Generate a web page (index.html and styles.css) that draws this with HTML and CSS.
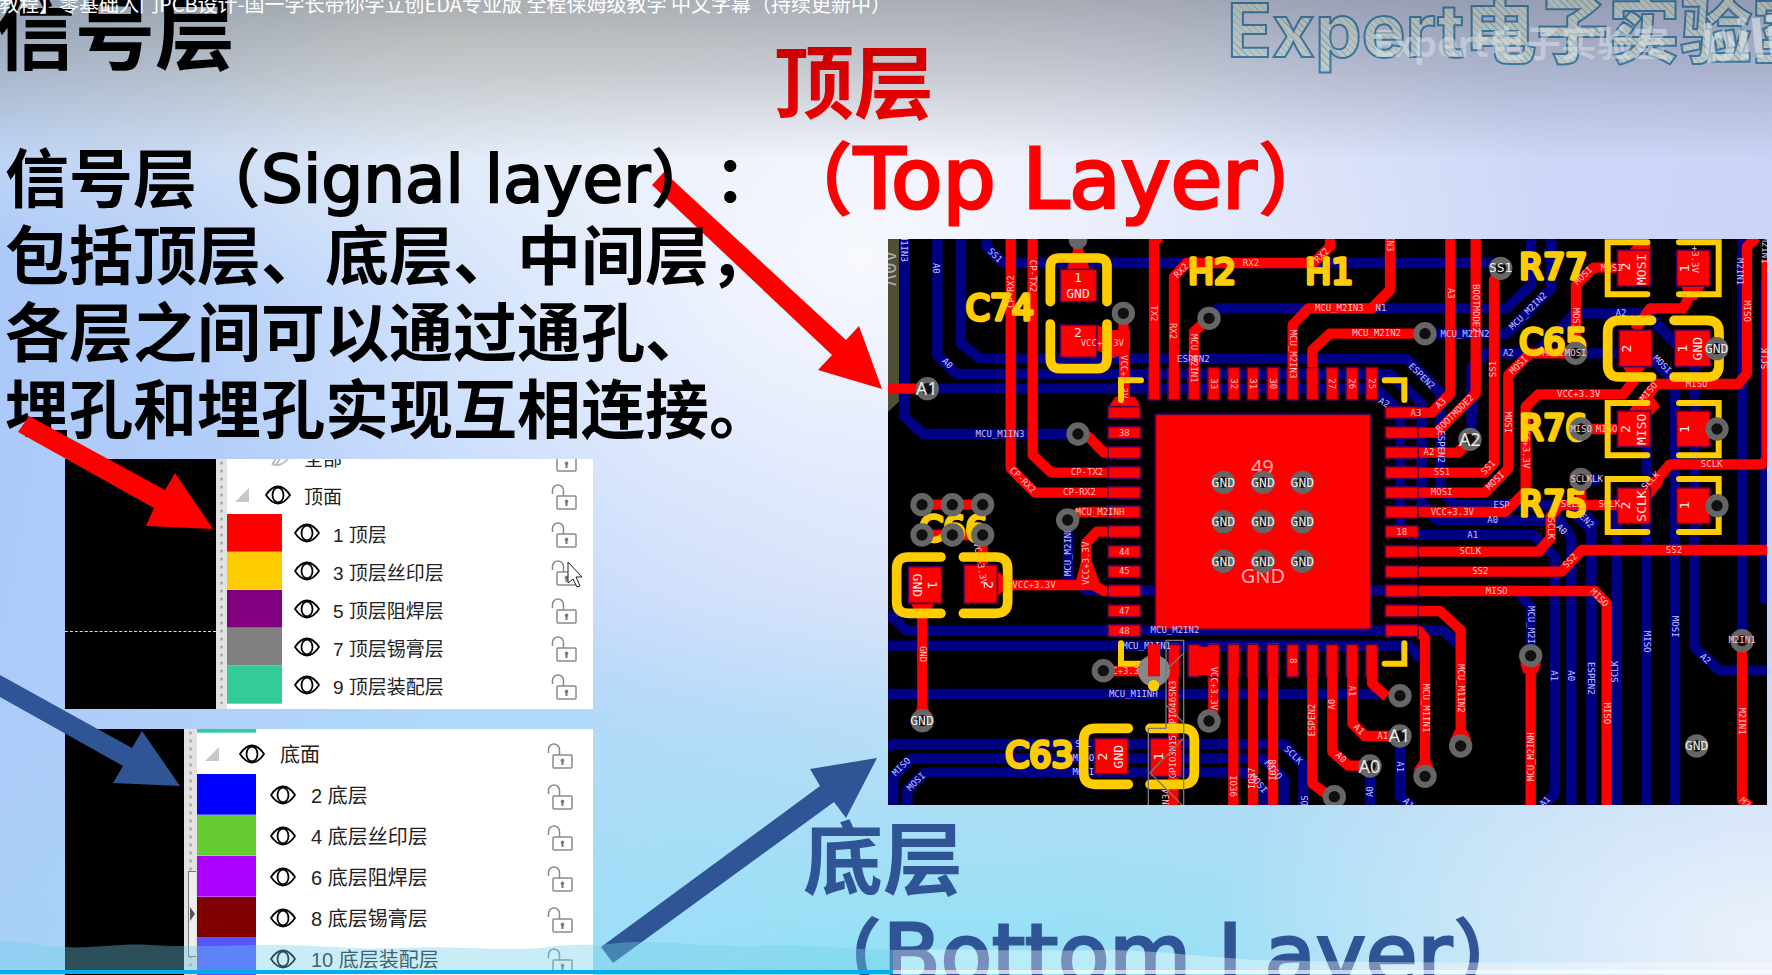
FILE: index.html
```html
<!DOCTYPE html>
<html lang="zh-CN">
<head>
<meta charset="utf-8">
<title>信号层</title>
<link rel="stylesheet" href="styles.css">
</head>
<body>
<svg class="defs" aria-hidden="true">
  <symbol id="eye" viewBox="0 0 26 20">
    <path d="M1 10C5 4 9 1.500 13 1.500S21 4 25 10C21 16 17 18.500 13 18.500S5 16 1 10Z" fill="none" stroke="#000" stroke-width="1.800"/>
    <ellipse cx="13" cy="10" rx="5.500" ry="7.500" fill="none" stroke="#000" stroke-width="1.800"/>
  </symbol>
  <symbol id="eye-off" viewBox="0 0 26 20">
    <path d="M1 10C5 4 9 1.500 13 1.500M8 17C12 20 20 17 25 9M16 3L7 18M20 3L11 18" fill="none" stroke="#bbb" stroke-width="1.800"/>
  </symbol>
  <symbol id="lock" viewBox="0 0 26 26">
    <path d="M1.500 10V6.500A5.500 5.500 0 0 1 12.500 6.500V12" fill="none" stroke="#8a8a8a" stroke-width="1.500"/>
    <rect x="6" y="12" width="19" height="13" rx="1" fill="none" stroke="#8a8a8a" stroke-width="1.500"/>
    <path d="M15.500 15.500a2 2 0 0 1 1 3.600V22h-2v-2.900a2 2 0 0 1 1-3.600Z" fill="#777"/>
  </symbol>
  <symbol id="fold" viewBox="0 0 14 14"><path d="M14 0V14H0Z" fill="#c8c8c8"/></symbol>
</svg>

<main class="slide">
  <svg class="arrows arrows-back" aria-hidden="true">
    <polygon class="arrow-top" points="664,172 846,340 859,326 882,389 818,370 832,355 652,185"/>
  </svg>

  <section class="left">
    <h1 class="title">信号层</h1>
    <p class="intro">信号层（<span class="latin">Signal layer</span>）：<br>包括顶层、底层、中间层，<br>各层之间可以通过通孔、<br>埋孔和埋孔实现互相连接。</p>

    <div class="panel panel-top">
      <div class="canvas"><div class="guide"></div></div>
      <div class="splitter"></div>
      <ul class="layers">
        <li class="group"><span></span><button aria-label="显示全部"><svg class="eye"><use href="#eye-off"/></svg></button><span>全部</span><button class="lock-btn" aria-label="锁定全部"><svg class="lock"><use href="#lock"/></svg></button></li>
        <li class="group"><svg class="fold"><use href="#fold"/></svg><button aria-label="显示顶面"><svg class="eye"><use href="#eye"/></svg></button><span>顶面</span><button class="lock-btn" aria-label="锁定顶面"><svg class="lock"><use href="#lock"/></svg></button></li>
        <li class="layer"><i class="swatch red"></i><button aria-label="显示 1"><svg class="eye"><use href="#eye"/></svg></button><span>1 顶层</span><button class="lock-btn" aria-label="锁定 1"><svg class="lock"><use href="#lock"/></svg></button></li>
        <li class="layer"><i class="swatch yellow"></i><button aria-label="显示 3"><svg class="eye"><use href="#eye"/></svg></button><span>3 顶层丝印层</span><button class="lock-btn" aria-label="锁定 3"><svg class="lock"><use href="#lock"/></svg></button></li>
        <li class="layer"><i class="swatch purple"></i><button aria-label="显示 5"><svg class="eye"><use href="#eye"/></svg></button><span>5 顶层阻焊层</span><button class="lock-btn" aria-label="锁定 5"><svg class="lock"><use href="#lock"/></svg></button></li>
        <li class="layer"><i class="swatch gray"></i><button aria-label="显示 7"><svg class="eye"><use href="#eye"/></svg></button><span>7 顶层锡膏层</span><button class="lock-btn" aria-label="锁定 7"><svg class="lock"><use href="#lock"/></svg></button></li>
        <li class="layer"><i class="swatch green"></i><button aria-label="显示 9"><svg class="eye"><use href="#eye"/></svg></button><span>9 顶层装配层</span><button class="lock-btn" aria-label="锁定 9"><svg class="lock"><use href="#lock"/></svg></button></li>
      </ul>
    </div>

    <div class="panel panel-bottom">
      <div class="canvas"></div>
      <div class="splitter"><div class="handle"></div></div>
      <ul class="layers">
        <li class="sliver"><i class="swatch green"></i></li>
        <li class="group"><svg class="fold"><use href="#fold"/></svg><button aria-label="显示底面"><svg class="eye"><use href="#eye"/></svg></button><span>底面</span><button class="lock-btn" aria-label="锁定底面"><svg class="lock"><use href="#lock"/></svg></button></li>
        <li class="layer"><i class="swatch blue"></i><button aria-label="显示 2"><svg class="eye"><use href="#eye"/></svg></button><span>2 底层</span><button class="lock-btn" aria-label="锁定 2"><svg class="lock"><use href="#lock"/></svg></button></li>
        <li class="layer"><i class="swatch lime"></i><button aria-label="显示 4"><svg class="eye"><use href="#eye"/></svg></button><span>4 底层丝印层</span><button class="lock-btn" aria-label="锁定 4"><svg class="lock"><use href="#lock"/></svg></button></li>
        <li class="layer"><i class="swatch violet"></i><button aria-label="显示 6"><svg class="eye"><use href="#eye"/></svg></button><span>6 底层阻焊层</span><button class="lock-btn" aria-label="锁定 6"><svg class="lock"><use href="#lock"/></svg></button></li>
        <li class="layer"><i class="swatch maroon"></i><button aria-label="显示 8"><svg class="eye"><use href="#eye"/></svg></button><span>8 底层锡膏层</span><button class="lock-btn" aria-label="锁定 8"><svg class="lock"><use href="#lock"/></svg></button></li>
        <li class="layer"><i class="swatch indigo"></i><button aria-label="显示 10"><svg class="eye"><use href="#eye"/></svg></button><span>10 底层装配层</span><button class="lock-btn" aria-label="锁定 10"><svg class="lock"><use href="#lock"/></svg></button></li>
      </ul>
    </div>
  </section>

  <section class="right">
    <h2 class="caption caption-top">顶层<br>（<span class="latin">Top Layer</span>）</h2>
    <svg class="pcb" viewBox="24 27 2637 1698" role="img" aria-label="PCB">
      <defs>
        <g id="via"><circle r="35" fill="#666"/><circle r="17" fill="#101010"/></g>
        <rect id="ph" x="-49" y="-18" width="98" height="36"/>
        <rect id="pv" x="-18" y="-49" width="36" height="98"/>
      </defs>
      <rect x="24" y="27" width="2637" height="1698" fill="#000"/>
      <path d="M24 27H57V515L24 545Z" fill="#4f4f36"/>
      <g class="blue-track">
        <path d="M73 27V560L130 612H594"/>
        <path d="M172 27V375L230 432H1530L1625 520V820L1670 870H2040L2074 925V1727"/>
        <path d="M242 27V340L300 386H1580L1682 490V780L1725 825H2060L2134 900V1727"/>
        <path d="M142 476H1490L1562 548V890L1590 914H1960L2025 980V1690L1985 1730"/>
        <path d="M320 27V50L370 99H1862"/>
        <path d="M987 265L1015 235H1880L1953 165V27"/>
        <path d="M1635 311H1880L2014 175V27"/>
        <path d="M1775 620V410L1815 370H2210M1970 370L2085 250H2300L2443 400V1250L2520 1322H2661"/>
        <path d="M2300 370L2385 455V1727M2300 600V1727M2210 800V1727M2587 27V1230M2656 150V1120"/>
        <path d="M600 1065L620 1081H1910L1952 1130V1270"/>
        <path d="M24 1150L80 1202H1690L1742 1250"/>
        <path d="M24 1247H1590L1625 1290M24 1392H1500"/>
        <path d="M24 1556L40 1542H1210L1270 1605V1727"/>
        <path d="M40 1727V1640L95 1585H1150L1214 1650V1727"/>
        <path d="M82 1727V1680L135 1627H1100L1155 1690V1727"/>
        <path d="M565 870V1050M1560 1520V1700L1595 1730M1470 1610V1727"/>
        <path d="M2103 745L2160 750M2100 840L2150 890"/>
      </g>
      <g class="red-track">
        <path d="M24 476H142M392 27V715L465 788H782M458 27V675L515 728H782"/>
        <path d="M594 612L625 620L672 668H782M594 27V130M730 250L735 530M650 330L735 310"/>
        <path d="M822 27V510M822 35L840 20M882 510V140L920 99H1300L1350 50V27"/>
        <path d="M987 265L942 305V510M1530 27V180L1475 235H1285L1238 285V510"/>
        <path d="M1635 311H1350L1297 360V510M1711 27V490L1655 548H1516"/>
        <path d="M1787 27V490L1670 608H1516M1770 625L1735 668H1516"/>
        <path d="M1862 115L1842 150V700L1815 728H1516"/>
        <path d="M2230 113H2140L2088 165V370H1950L1885 435V715L1815 788H1516"/>
        <path d="M1516 846H1875L1937 785V530L1975 493H2230L2270 440"/>
        <path d="M2260 550L2330 462H2575L2601 430V50L2630 22"/>
        <path d="M2660 90V690L2645 703H2370L2270 820"/>
        <path d="M2450 150L2410 235H2310L2265 300M2103 597H2240"/>
        <path d="M2240 825H2040L2012 860V925L1975 965H1516M2103 760V825"/>
        <path d="M1516 1025H2045L2105 960H2661M1516 1083H2145L2180 1120V1727"/>
        <path d="M1516 1143H1680L1742 1200V1548M1516 1202H1615L1635 1225V1640"/>
        <path d="M1952 1277V1727M2586 1232V1710L2610 1730"/>
        <path d="M563 870L600 846H782M782 905H650L618 940V1000L600 1065M360 1065H640L672 1083H782"/>
        <path d="M126 824H308M126 915H308V1010M127 1100V1470M670 1323H810"/>
        <path d="M880 1240V1727M1060 1240V1727M1119 1240V1727M1179 1240V1727"/>
        <path d="M1297 1290V1660L1350 1700M1357 1290V1565L1405 1607H1460"/>
        <path d="M1417 1290V1480L1455 1518H1550M1476 1290V1360L1520 1400M1000 1240V1440L987 1470"/>
      </g>
      <g fill="#f00">
        <path d="M560 120L580 60H610L630 120ZM650 285L690 300H750V360L700 385L650 360ZM706 500H765L783 532H685ZM2212 100L2270 35H2311V100ZM2400 160H2480L2450 210H2420ZM2212 590L2270 545 2320 500 2340 530 2311 560V650ZM2212 825L2290 770 2340 730 2350 760 2311 810ZM594 1060L605 980H630L660 1060ZM105 1450L115 1420H140L150 1450ZM2225 405H2300L2275 445H2250ZM85 1110H170L145 1150H110ZM350 1020L390 1060 352 1100ZM1930 1330L1920 1300H1984L1972 1330ZM1600 1620L1620 1590H1650L1665 1620ZM1710 1530L1725 1500H1760L1775 1530Z"/>
      </g>
      <g class="pads">
        <rect x="826" y="553" width="647" height="645"/>
        <use href="#ph" x="733" y="548"/><use href="#ph" x="733" y="608"/><use href="#ph" x="733" y="668"/><use href="#ph" x="733" y="728"/><use href="#ph" x="733" y="788"/><use href="#ph" x="733" y="846"/><use href="#ph" x="733" y="905"/><use href="#ph" x="733" y="965"/><use href="#ph" x="733" y="1025"/><use href="#ph" x="733" y="1083"/><use href="#ph" x="733" y="1143"/><use href="#ph" x="733" y="1202"/>
        <use href="#ph" x="1565" y="548"/><use href="#ph" x="1565" y="608"/><use href="#ph" x="1565" y="668"/><use href="#ph" x="1565" y="728"/><use href="#ph" x="1565" y="788"/><use href="#ph" x="1565" y="846"/><use href="#ph" x="1565" y="905"/><use href="#ph" x="1565" y="965"/><use href="#ph" x="1565" y="1025"/><use href="#ph" x="1565" y="1083"/><use href="#ph" x="1565" y="1143"/><use href="#ph" x="1565" y="1202"/>
        <use href="#pv" x="822" y="461"/><use href="#pv" x="882" y="461"/><use href="#pv" x="942" y="461"/><use href="#pv" x="1001" y="461"/><use href="#pv" x="1061" y="461"/><use href="#pv" x="1119" y="461"/><use href="#pv" x="1179" y="461"/><use href="#pv" x="1238" y="461"/><use href="#pv" x="1297" y="461"/><use href="#pv" x="1356" y="461"/><use href="#pv" x="1416" y="461"/><use href="#pv" x="1475" y="461"/>
        <use href="#pv" x="822" y="1292"/><use href="#pv" x="882" y="1292"/><use href="#pv" x="942" y="1292"/><use href="#pv" x="1001" y="1292"/><use href="#pv" x="1061" y="1292"/><use href="#pv" x="1119" y="1292"/><use href="#pv" x="1179" y="1292"/><use href="#pv" x="1238" y="1292"/><use href="#pv" x="1297" y="1292"/><use href="#pv" x="1356" y="1292"/><use href="#pv" x="1416" y="1292"/><use href="#pv" x="1475" y="1292"/>
        <rect x="541" y="118" width="109" height="97"/><rect x="541" y="285" width="109" height="97"/>
        <rect x="2217" y="300" width="99" height="110"/><rect x="2384" y="300" width="108" height="110"/>
        <rect x="2212" y="60" width="99" height="108"/><rect x="2390" y="60" width="100" height="108"/>
        <rect x="2212" y="543" width="99" height="108"/><rect x="2390" y="543" width="100" height="108"/>
        <rect x="2212" y="773" width="99" height="108"/><rect x="2390" y="773" width="100" height="108"/>
        <rect x="85" y="1010" width="100" height="110"/><rect x="252" y="1005" width="100" height="115"/>
        <rect x="644" y="1525" width="100" height="107"/><rect x="810" y="1525" width="95" height="115"/>
      </g>
      <path d="M950 1255H1010V1270L972 1290ZM950 1335L972 1320 1010 1335ZM935 1250H1005V1330H935ZM1284 412H1310V380H1284ZM808 420H836V380H808ZM868 420H896V380H868ZM928 420H956V380H928ZM1224 420H1252V380H1224Z" fill="#f00"/>
      <path d="M1046 1300H1074V1360H1046ZM1105 1300H1133V1360H1105ZM1165 1300H1193V1360H1165ZM1283 1300H1311V1360H1283ZM1343 1300H1371V1360H1343ZM1403 1300H1431V1360H1403ZM1462 1300H1490V1350H1462ZM866 1300H895V1360H866Z" fill="#f00"/>

      <g class="net blue-net">
        <text transform="translate(73 55) rotate(90)">M1IN3</text>
        <text transform="translate(168 115) rotate(90)">A0</text>
        <text transform="translate(345 76) rotate(45)">SS1</text>
        <text transform="translate(202 400) rotate(45)">A0</text>
        <text x="360" y="612">MCU_M1IN3</text>
        <text x="940" y="386">ESPEN2</text>
        <text x="1503" y="235">N1</text>
        <text x="1755" y="311">MCU_M2IN2</text>
        <text transform="translate(1625 438) rotate(45)">ESPEN2</text>
        <text transform="translate(1512 518) rotate(30)">A2</text>
        <text transform="translate(1682 650) rotate(90)">ESPEN2</text>
        <text transform="translate(1944 243) rotate(-45)">MCU_M2IN2</text>
        <text x="1885" y="370">A2</text><text x="2223" y="250">A2</text>
        <text transform="translate(2347 403) rotate(45)">MOSI</text>
        <text transform="translate(2580 125) rotate(90)">M2IN1</text>
        <text transform="translate(2656 60) rotate(90)">M2IN1</text>
        <text x="1865" y="824">ESP</text><text x="1838" y="870">A0</text>
        <text transform="translate(2120 872) rotate(45)">EN2</text>
        <text transform="translate(2045 898) rotate(45)">A0</text>
        <text x="1778" y="914">A1</text>
        <text transform="translate(565 965) rotate(-90)">MCU_M2INH</text>
        <text x="885" y="1200">MCU_M2IN2</text><text x="800" y="1247">MCU_M1IN1</text><text x="760" y="1392">MCU_M1INH</text>
        <text x="610" y="1542">SCL</text><text x="610" y="1585">MISO</text><text x="610" y="1627">MOSI</text>
        <text transform="translate(64 1610) rotate(-45)">MISO</text>
        <text transform="translate(108 1655) rotate(-45)">MOSI</text>
        <text transform="translate(1240 1575) rotate(45)">SCLK</text>
        <text transform="translate(1180 1620) rotate(50)">MISO</text>
        <text transform="translate(1136 1660) rotate(50)">MOSI</text>
        <text transform="translate(1274 1712) rotate(-90)">OS</text>
        <text transform="translate(1470 1685) rotate(-90)">A0</text>
        <text transform="translate(1559 1610) rotate(90)">A1</text>
        <text transform="translate(1585 1720) rotate(45)">A1</text>
        <text transform="translate(1953 1185) rotate(90)">MCU_M2I</text>
        <text transform="translate(2023 1337) rotate(90)">A1</text>
        <text transform="translate(2072 1337) rotate(90)">A0</text>
        <text transform="translate(2134 1345) rotate(90)">ESPEN2</text>
        <text transform="translate(2206 1325) rotate(-90)">SCLK</text>
        <text transform="translate(2300 1235) rotate(90)">MISO</text>
        <text transform="translate(2384 1190) rotate(90)">MOSI</text>
        <text transform="translate(2476 1286) rotate(45)">A2</text>
        <text transform="translate(1995 1715) rotate(-45)">A1</text>
      </g>
      <g class="net red-net">
        <text transform="translate(392 185) rotate(-90)">CP-RX2</text>
        <text transform="translate(458 138) rotate(90)">CP-TX2</text>
        <text transform="translate(428 750) rotate(45)">CP-RX2</text>
        <text x="621" y="727">CP-TX2</text><text x="598" y="787">CP-RX2</text><text x="660" y="846">MCU_M2INH</text>
        <text x="667" y="340">VCC+3.3V</text>
        <text transform="translate(733 440) rotate(90)">VCC+3.3V</text>
        <text transform="translate(822 250) rotate(90)">TX2</text>
        <text transform="translate(880 303) rotate(90)">RX2</text>
        <text transform="translate(903 122) rotate(-45)">RX2</text>
        <text x="1113" y="98">RX2</text>
        <text transform="translate(1325 76) rotate(-45)">RX2</text>
        <text transform="translate(942 385) rotate(90)">MCU_M2IN1</text>
        <text transform="translate(1238 372) rotate(90)">MCU_M2IN3</text>
        <text transform="translate(1530 40) rotate(90)">IN3</text>
        <text x="1378" y="234">MCU_M2IN3</text><text x="1490" y="310">MCU_M2IN2</text>
        <text transform="translate(1712 190) rotate(90)">A3</text>
        <text transform="translate(1787 235) rotate(90)">BOOTMODE2</text>
        <text transform="translate(1682 520) rotate(-45)">A3</text>
        <text transform="translate(1725 550) rotate(-45)">BOOTMODE2</text>
        <text x="1608" y="548">A3</text><text x="1647" y="667">A2</text><text x="1686" y="726">SS1</text><text x="1685" y="786">MOSI</text><text x="1717" y="846">VCC+3.3V</text>
        <text transform="translate(1840 417) rotate(-90)">SS1</text>
        <text transform="translate(1824 712) rotate(-45)">SS1</text>
        <text transform="translate(1846 752) rotate(-45)">MOSI</text>
        <text transform="translate(1885 577) rotate(90)">MOSI</text>
        <text transform="translate(1916 405) rotate(-45)">MOSI</text>
        <text transform="translate(2088 265) rotate(90)">MOSI</text>
        <text transform="translate(2110 137) rotate(-45)">MOSI</text>
        <text x="2195" y="113">MOSI</text><text x="2020" y="370">MOSI</text>
        <text x="2096" y="491">VCC+3.3V</text>
        <text transform="translate(1938 650) rotate(90)">VCC+3.3V</text>
        <text transform="translate(2306 485) rotate(-50)">MISO</text>
        <text x="2450" y="462">MISO</text><text x="2495" y="702">SCLK</text><text x="2180" y="597">MISO</text><text x="2188" y="823">SCLK</text><text x="2075" y="823">SCLK</text>
        <text transform="translate(2602 243) rotate(90)">MISO</text>
        <text transform="translate(2655 385) rotate(-90)">SCLK</text>
        <text transform="translate(2312 752) rotate(-45)">SCLK</text>
        <text transform="translate(2445 80) rotate(90)">C+3.3V</text>
        <text transform="translate(2013 895) rotate(90)">SCLK</text>
        <text x="1771" y="964">SCLK</text><text x="1801" y="1023">SS2</text><text x="1850" y="1083">MISO</text><text x="2382" y="959">SS2</text>
        <text transform="translate(2070 992) rotate(-45)">SS2</text>
        <text transform="translate(2158 1103) rotate(45)">MISO</text>
        <text transform="translate(2182 1450) rotate(90)">MISO</text>
        <text transform="translate(1742 1375) rotate(90)">MCU_M1IN2</text>
        <text transform="translate(1637 1434) rotate(90)">MCU_M1IN1</text>
        <text transform="translate(1952 1580) rotate(-90)">MCU_M2INH</text>
        <text transform="translate(2587 1473) rotate(90)">M2IN1</text>
        <text transform="translate(2595 1718) rotate(45)">M2</text>
        <text x="462" y="1065">VCC+3.3V</text>
        <text transform="translate(618 1000) rotate(-90)">VCC+3.3V</text>
        <text transform="translate(301 1000) rotate(80)">VCC+3.3V</text>
        <text transform="translate(128 1272) rotate(90)">GND</text>
        <text x="745" y="1322">C+3.3V</text>
        <text transform="translate(1001 1375) rotate(90)">VCC+3.3V</text>
        <text transform="translate(880 1425) rotate(-90)">GPIO46SN3</text>
        <text transform="translate(880 1580) rotate(-90)">GPIO3N15</text>
        <text transform="translate(858 1700) rotate(-90)">N34</text>
        <text transform="translate(1060 1668) rotate(90)">IO36</text>
        <text transform="translate(1117 1645) rotate(-90)">IO37</text>
        <text transform="translate(1178 1620) rotate(-90)">IO38</text>
        <text transform="translate(1296 1470) rotate(-90)">ESPEN2</text>
        <text transform="translate(1357 1423) rotate(-90)">A0</text>
        <text transform="translate(1416 1383) rotate(90)">A1</text>
        <text transform="translate(1437 1498) rotate(45)">A1</text>
        <text x="1508" y="1518">A1</text>
        <text transform="translate(1383 1582) rotate(45)">A0</text>
        <text x="733" y="608">38</text><text x="733" y="965">44</text><text x="733" y="1023">45</text><text x="733" y="1142">47</text><text x="733" y="1202">48</text><text x="1565" y="905">18</text>
        <text transform="translate(1001 461) rotate(90)">33</text><text transform="translate(1061 461) rotate(90)">32</text><text transform="translate(1119 461) rotate(90)">31</text><text transform="translate(1179 461) rotate(90)">30</text><text transform="translate(1356 461) rotate(90)">27</text><text transform="translate(1416 461) rotate(90)">26</text><text transform="translate(1475 461) rotate(90)">25</text><text transform="translate(1238 1292) rotate(90)">8</text>
      </g>

      <g class="silk">
        <path d="M511 215V110Q511 84 537 84H655Q681 84 681 110V215M511 282V385Q511 416 540 416H652Q681 416 681 385V282"/>
        <path d="M2315 271H2218Q2183 271 2183 306V406Q2183 441 2218 441H2315M2382 271H2482Q2517 271 2517 306V406Q2517 441 2482 441H2382"/>
        <path d="M183 981H85Q50 981 50 1016V1115Q50 1150 85 1150H183M250 981H348Q383 981 383 1016V1115Q383 1150 348 1150H250"/>
        <path d="M745 1495H646Q611 1495 611 1530V1628Q611 1663 646 1663H745M810 1495H908Q943 1495 943 1530V1628Q943 1663 908 1663H810"/>
      </g>
      <g class="silk thin">
        <path d="M2302 37H2183V193H2302M2397 37H2516V193H2397M2302 519H2183V676H2302M2397 519H2516V676H2397M2302 747H2183V906H2302M2397 747H2516V906H2397"/>
        <path d="M723 510V451H783M1514 451H1573V510M723 1240V1301H783M1514 1301H1573V1240"/>
      </g>
      <g class="ref">
        <text x="360" y="269">C74</text><text x="996" y="163">H2</text><text x="1348" y="163">H1</text>
        <text x="2020" y="147">R77</text><text x="2020" y="373">C65</text><text x="2020" y="629">R76</text><text x="2020" y="858">R75</text>
        <text x="220" y="934">C66</text><text x="478" y="1611">C63</text>
      </g>

      <circle cx="822" cy="1322" r="48" fill="#888"/>
      <rect x="804" y="1243" width="36" height="96" fill="#f00"/>
      <circle cx="821" cy="1367" r="17" fill="#fc0"/>
      <path d="M858 1231H911V1727M858 1231V1495H805V1727M858 1320L911 1270M858 1425L911 1478M911 1525L810 1628L908 1727" fill="none" stroke="#777" stroke-width="4"/>

      <g>
        <circle cx="594" cy="30" r="28" fill="#666"/>
        <use href="#via" x="730" y="250"/><use href="#via" x="142" y="476"/><use href="#via" x="594" y="612"/>
        <use href="#via" x="126" y="824"/><use href="#via" x="217" y="824"/><use href="#via" x="308" y="824"/>
        <use href="#via" x="126" y="915"/><use href="#via" x="217" y="915"/><use href="#via" x="308" y="915"/>
        <use href="#via" x="563" y="870"/><use href="#via" x="987" y="265"/><use href="#via" x="1635" y="311"/>
        <use href="#via" x="1862" y="115"/><use href="#via" x="1770" y="628"/><use href="#via" x="2087" y="370"/>
        <use href="#via" x="2510" y="356"/><use href="#via" x="2103" y="597"/><use href="#via" x="2103" y="748"/>
        <use href="#via" x="2511" y="597"/><use href="#via" x="2511" y="827"/>
        <use href="#via" x="1030" y="757"/><use href="#via" x="1149" y="757"/><use href="#via" x="1267" y="757"/>
        <use href="#via" x="1030" y="875"/><use href="#via" x="1149" y="875"/><use href="#via" x="1267" y="875"/>
        <use href="#via" x="1030" y="994"/><use href="#via" x="1149" y="994"/><use href="#via" x="1267" y="994"/>
        <use href="#via" x="127" y="1472"/><use href="#via" x="670" y="1322"/><use href="#via" x="987" y="1473"/>
        <use href="#via" x="1363" y="1700"/><use href="#via" x="1470" y="1608"/><use href="#via" x="1560" y="1518"/>
        <use href="#via" x="1560" y="1397"/><use href="#via" x="1635" y="1639"/><use href="#via" x="1742" y="1548"/>
        <use href="#via" x="1952" y="1277"/><use href="#via" x="2586" y="1232"/><use href="#via" x="2450" y="1548"/>
      </g>
      <g class="net pin">
        <text x="1030" y="757">GND</text><text x="1149" y="757">GND</text><text x="1267" y="757">GND</text>
        <text x="1030" y="875">GND</text><text x="1149" y="875">GND</text><text x="1267" y="875">GND</text>
        <text x="1030" y="994">GND</text><text x="1149" y="994">GND</text><text x="1267" y="994">GND</text>
        <text x="126" y="1472">GND</text><text x="2450" y="1547">GND</text><text x="2510" y="354">GND</text>
        <text x="1862" y="113">SS1</text><text x="594" y="142">1</text><text x="594" y="190">GND</text><text x="594" y="308">2</text>
        <text transform="translate(2236 110) rotate(-90)">2</text><text transform="translate(2284 118) rotate(-90)">MOSI</text><text transform="translate(2413 115) rotate(-90)">1</text>
        <text transform="translate(2240 356) rotate(-90)">2</text><text transform="translate(2408 356) rotate(-90)">1</text><text transform="translate(2453 356) rotate(-90)">GND</text>
        <text transform="translate(2236 597) rotate(-90)">2</text><text transform="translate(2284 598) rotate(-90)">MISO</text><text transform="translate(2413 597) rotate(-90)">1</text>
        <text transform="translate(2236 827) rotate(-90)">2</text><text transform="translate(2284 828) rotate(-90)">SCLK</text><text transform="translate(2413 826) rotate(-90)">1</text>
        <text transform="translate(158 1065) rotate(90)">1</text><text transform="translate(112 1066) rotate(90)">GND</text><text transform="translate(325 1065) rotate(90)">2</text>
        <text transform="translate(668 1580) rotate(-90)">2</text><text transform="translate(715 1580) rotate(-90)">GND</text><text transform="translate(835 1580) rotate(-90)">1</text>
      </g>
      <g class="net red-net">
        <text x="2087" y="370">MOSI</text><text x="2103" y="597">MISO</text><text x="2120" y="748">SCLKLK</text><text x="2586" y="1231">M2IN1</text>
      </g>
      <g class="net big">
        <text x="140" y="475">A1</text><text x="1770" y="626">A2</text><text x="1558" y="1516">A1</text><text x="1468" y="1608">A0</text>
      </g>
      <g class="net chip-net">
        <text x="1147" y="708">49</text><text x="1149" y="1035">GND</text>
      </g>
      <text class="net olive" transform="translate(26 115) rotate(90)">A0V</text>
      <g>
        <use href="#via" x="1149" y="757"/><use href="#via" x="1149" y="994"/>
      </g>
      <g class="net pin"><text x="1149" y="757">GND</text><text x="1149" y="994">GND</text></g>
    </svg>
    <h2 class="caption caption-bottom">底层<br>（<span class="latin">Bottom Layer</span>）</h2>
  </section>

  <svg class="arrows arrows-front" aria-hidden="true">
    <polygon class="arrow-top" points="29,416 165,490 175,473 213,529 146,526 154,508 18,432"/>
    <polygon class="arrow-bottom" points="-2,674 132,748 142,731 180,786 113,783 123,766 -2,696"/>
    <polygon class="arrow-bottom" points="601,947 820,786 810,769 877,758 846,818 834,802 613,963"/>
    <path d="M568 562V583L573 579L577 587L580 586L576 577H582Z" fill="#fff" stroke="#222" stroke-width="1"/>
  </svg>

  <div class="logo"><span class="latin">Expert</span>电子实验室</div>
  <div class="shade"></div>
  <div class="watermark">Expert电子实验室</div>
  <div class="site">bili</div>
  <p class="video-title">教程】零基础入门PCB设计-国一学长带你学立创EDA专业版 全程保姆级教学 中文字幕（持续更新中）</p>

  <div class="player">
    <svg class="wave" viewBox="0 0 1772 30" preserveAspectRatio="none" aria-hidden="true">
      <path d="M0 1C20 0 40 6 65 7C90 9 120 3 150 5C180 7 220 6 260 5C320 4 350 10 400 8C450 5 500 11 540 8C570 3 590 6 610 4C650 -2 700 8 760 6C810 4 850 10 893 10V30H0Z" fill="#72cfe7" fill-opacity="0.380"/>
      <path d="M893 10C960 8 1020 12 1100 10C1160 10 1200 17 1260 20C1400 24 1600 22 1772 22V30H893Z" fill="#fff" fill-opacity="0.350"/>
    </svg>
    <progress class="bar" value="893" max="1772" aria-label="播放进度"></progress>
  </div>
</main>
</body>
</html>
```
FILE: styles.css
```css
* { box-sizing: border-box; }

body {
  margin: 0;
  font-family: "Liberation Sans", "Noto Sans CJK SC", sans-serif;
}

.defs { position: absolute; width: 0; height: 0; }

.slide {
  position: relative;
  display: grid;
  grid-template-columns: 774fr 998fr;
  height: 100vh;
  overflow: hidden;
  background:
    radial-gradient(ellipse 700px 460px at 860px 260px, rgba(252, 252, 255, 0.9), rgba(250, 252, 255, 0) 100%),
    radial-gradient(ellipse 900px 260px at 460px 40px, rgba(240, 242, 238, 0.9), rgba(240, 244, 244, 0) 100%),
    radial-gradient(ellipse 560px 300px at 1772px 940px, rgba(236, 242, 251, 1), rgba(225, 245, 250, 0) 100%),
    radial-gradient(ellipse 1200px 420px at 950px 1000px, rgba(140, 225, 245, 1), rgba(160, 226, 246, 0) 100%),
    linear-gradient(100deg, #a9c7f8 0%, #bcd5fb 30%, #d2dcf8 55%, #c9d3f5 100%);
}

.left, .right { min-width: 0; white-space: nowrap; }

.left { display: flex; flex-direction: column; }

.title, .intro, .caption, .logo {
  margin: 0;
  font-family: "Noto Sans CJK SC", sans-serif;
  font-weight: 700;
  text-spacing-trim: space-all;
}

.latin {
  font-family: "DejaVu Sans", sans-serif;
  font-weight: 400;
}

.title {
  margin: -12px 0 68px -5px;
  font-size: 80px;
  line-height: 80px;
}

.intro {
  position: relative;
  z-index: 1;
  padding-left: 5px;
  font-size: 64px;
  line-height: 77px;
}

.intro .latin {
  font-size: 66px;
  line-height: 64px;
  -webkit-text-stroke: 2px #000;
}

.panel {
  display: grid;
  flex: none;
  width: 528px;
  margin-left: 65px;
  background: #fff;
  overflow: hidden;
}

.panel-top {
  grid-template-columns: 151px 11px 1fr;
  height: 250px;
  margin-top: 15px;
  font-size: 19px;
}

.panel-bottom {
  grid-template-columns: 119px 13px 1fr;
  margin-top: 20px;
  font-size: 20px;
}

.canvas { background: #000; }

.guide { height: 173px; border-bottom: 1px dashed #ddd; }

.splitter {
  background: radial-gradient(circle at 50% 50%, #aaa 1px, transparent 2px) 0 0 / 100% 8px, #e2e2e2;
}

.handle {
  width: 8px;
  height: 86px;
  margin: 142px 0 0 4px;
  border: 1px solid #777;
  border-right: 0;
  background: #eee;
}

.handle::after {
  content: "";
  display: block;
  margin: 35px 0 0 1px;
  border: 7px solid transparent;
  border-left: 5px solid #555;
  border-right: 0;
}

.layers { margin: 0; padding: 0; list-style: none; color: #222; }

.panel-top .layers { margin-top: -21px; }

.layers li { display: grid; align-items: center; }

.panel-top li { height: 38px; }
.panel-bottom li { height: 41px; }
.panel-bottom .sliver { height: 4px; }

.panel-top .group { grid-template-columns: 38px 39px 1fr 42px; }
.panel-top .layer { grid-template-columns: 67px 39px 1fr 42px; }
.panel-bottom .group { grid-template-columns: 42px 41px 1fr 46px; }
.panel-bottom .layer { grid-template-columns: 73px 41px 1fr 46px; }

.layers button {
  display: flex;
  padding: 0;
  border: 0;
  background: none;
}

.layers .lock-btn { padding-top: 4px; }

.eye { width: 26px; height: 20px; }
.lock { width: 26px; height: 26px; }
.fold { width: 14px; height: 14px; margin-left: 8px; }

.swatch { display: block; width: 55px; height: 100%; border-bottom: 1px solid rgba(255, 255, 255, 0.3); }
.panel-bottom .swatch { width: 59px; }

.red { background: #f00; }
.yellow { background: #fc0; }
.purple { background: #800080; }
.gray { background: #808080; }
.green { background: #3c9; }
.blue { background: #00f; }
.lime { background: #6c3; }
.violet { background: #a0f; }
.maroon { background: #800000; }
.indigo { background: #5555ff; }

.right { padding: 29px 5px 0 0; }

.caption { font-size: 80px; line-height: 96px; }

.caption .latin {
  font-size: 84px;
  line-height: 80px;
  -webkit-text-stroke: 3px currentColor;
}

.caption-top { color: #f00; }
.caption-bottom { margin: 0 0 0 29px; color: #2f5597; }

.pcb {
  display: block;
  width: calc(100% - 114px);
  margin: 18px 0 0 114px;
}

.blue-track path, .red-track path { fill: none; stroke-width: 31; stroke-linejoin: round; }
.blue-track path { stroke: #000085; }
.red-track path { stroke: #f00; }
.pads { fill: #f00; stroke: #4b0050; stroke-width: 5; }

.net {
  font-family: "DejaVu Sans Mono", monospace;
  font-size: 27px;
  text-anchor: middle;
  dominant-baseline: central;
}

.blue-net { fill: #c4c4ff; }
.red-net { fill: #ffc4c4; }
.pin { font-size: 39px; fill: #eee; }
.big { font-family: "Noto Sans", sans-serif; font-size: 54px; fill: #e8e8e8; }
.chip-net { font-family: "Noto Sans", sans-serif; font-size: 60px; fill: #ffb0b0; }
.olive { font-size: 60px; fill: #aaa; }

.silk path { fill: none; stroke: #fc0; stroke-width: 29; stroke-linecap: round; }
.silk.thin path { stroke-width: 18; }

.ref {
  font-family: "DejaVu Sans", sans-serif;
  font-size: 104px;
  text-anchor: middle;
  fill: #fc0;
  stroke: #fc0;
  stroke-width: 11;
  stroke-linejoin: round;
}

.arrows {
  position: absolute;
  top: 0;
  left: 0;
  width: 100%;
  height: 100%;
  pointer-events: none;
}

.arrows-front { z-index: 2; }
.arrow-top { fill: #f00; }
.arrow-bottom { fill: #2f5597; }

.logo {
  position: absolute;
  top: -14px;
  left: 1227px;
  font-size: 72px;
  font-weight: 900;
  line-height: 80px;
  white-space: nowrap;
  color: transparent;
  background: repeating-linear-gradient(45deg, #e6f4f2 0 4px, #b9d0da 4px 5px);
  -webkit-background-clip: text;
  background-clip: text;
  -webkit-text-stroke: 2px #4a90c0;
}

.logo .latin { font-size: 74px; font-weight: 700; font-family: Inter, sans-serif; }

.watermark {
  position: absolute;
  top: 14px;
  left: 1373px;
  font: 700 36px/54px "Noto Sans CJK SC", sans-serif;
  white-space: nowrap;
  color: rgba(225, 228, 232, 0.5);
}

.site {
  position: absolute;
  top: 8px;
  left: 1702px;
  font: 700 54px/64px Inter, sans-serif;
  white-space: nowrap;
  color: rgba(225, 228, 232, 0.6);
  transform: rotate(-6deg);
}

.shade {
  position: absolute;
  inset: 0 0 auto;
  height: 160px;
  background: linear-gradient(rgba(0, 0, 0, 0.27), rgba(0, 0, 0, 0.16) 45%, rgba(0, 0, 0, 0));
}

.video-title {
  position: absolute;
  top: -10px;
  left: -1px;
  margin: 0;
  font: 400 20px/28px "Noto Sans CJK SC", sans-serif;
  white-space: nowrap;
  color: #fff;
}

.player {
  position: absolute;
  z-index: 3;
  inset: auto 0 1px;
}

.wave { display: block; width: 100%; height: 30px; }

.bar {
  display: block;
  width: 100%;
  height: 4px;
  border: 0;
  appearance: none;
  background: rgba(255, 255, 255, 0.5);
}

.bar::-webkit-progress-bar { background: rgba(255, 255, 255, 0.5); }
.bar::-webkit-progress-value { background: #00aeec; }
```
